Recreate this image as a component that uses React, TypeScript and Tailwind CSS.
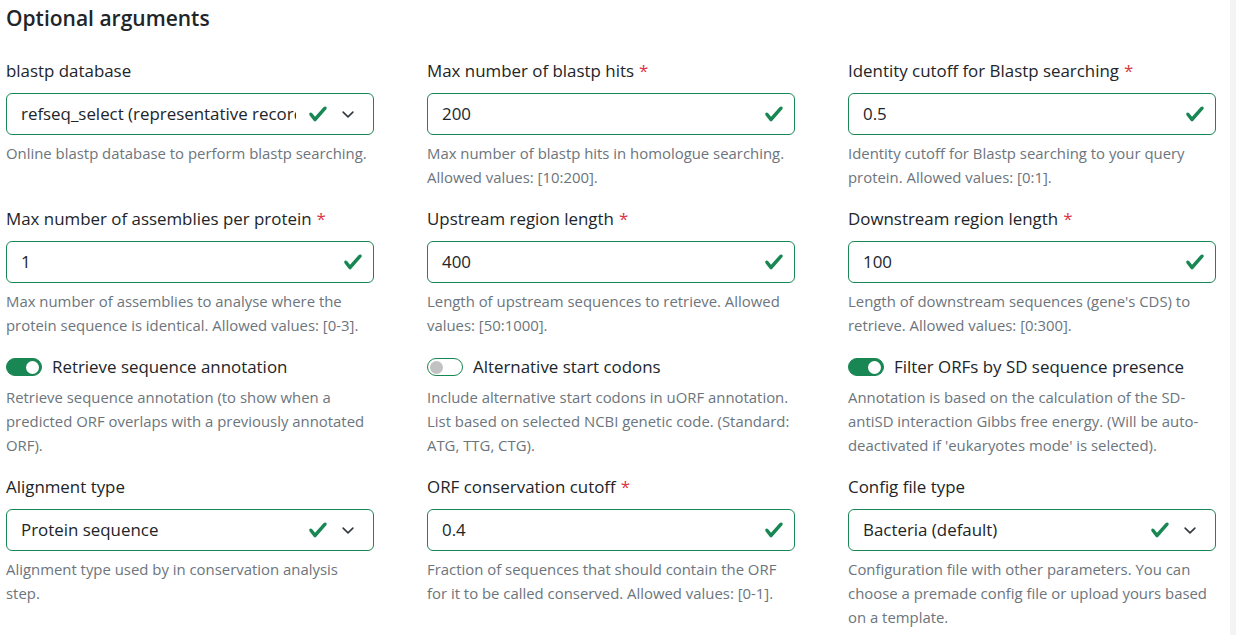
import React from 'react';

type Field = {
  kind: 'input' | 'select' | 'switch';
  label: string;
  required?: boolean;
  value?: string;
  on?: boolean;
  help: string;
};

const ROWS: Field[][] = [
  [
    {
      kind: 'select',
      label: 'blastp database',
      value: 'refseq_select (representative records)',
      help: 'Online blastp database to perform blastp searching.',
    },
    {
      kind: 'input',
      label: 'Max number of blastp hits',
      required: true,
      value: '200',
      help: 'Max number of blastp hits in homologue searching. Allowed values: [10:200].',
    },
    {
      kind: 'input',
      label: 'Identity cutoff for Blastp searching',
      required: true,
      value: '0.5',
      help: 'Identity cutoff for Blastp searching to your query protein. Allowed values: [0:1].',
    },
  ],
  [
    {
      kind: 'input',
      label: 'Max number of assemblies per protein',
      required: true,
      value: '1',
      help: 'Max number of assemblies to analyse where the protein sequence is identical. Allowed values: [0-3].',
    },
    {
      kind: 'input',
      label: 'Upstream region length',
      required: true,
      value: '400',
      help: 'Length of upstream sequences to retrieve. Allowed values: [50:1000].',
    },
    {
      kind: 'input',
      label: 'Downstream region length',
      required: true,
      value: '100',
      help: "Length of downstream sequences (gene's CDS) to retrieve. Allowed values: [0:300].",
    },
  ],
  [
    {
      kind: 'switch',
      label: 'Retrieve sequence annotation',
      on: true,
      help: 'Retrieve sequence annotation (to show when a predicted ORF overlaps with a previously annotated ORF).',
    },
    {
      kind: 'switch',
      label: 'Alternative start codons',
      on: false,
      help: 'Include alternative start codons in uORF annotation. List based on selected NCBI genetic code. (Standard: ATG, TTG, CTG).',
    },
    {
      kind: 'switch',
      label: 'Filter ORFs by SD sequence presence',
      on: true,
      help: "Annotation is based on the calculation of the SD-antiSD interaction Gibbs free energy. (Will be auto-deactivated if 'eukaryotes mode' is selected).",
    },
  ],
  [
    {
      kind: 'select',
      label: 'Alignment type',
      value: 'Protein sequence',
      help: 'Alignment type used by in conservation analysis step.',
    },
    {
      kind: 'input',
      label: 'ORF conservation cutoff',
      required: true,
      value: '0.4',
      help: 'Fraction of sequences that should contain the ORF for it to be called conserved. Allowed values: [0-1].',
    },
    {
      kind: 'select',
      label: 'Config file type',
      value: 'Bacteria (default)',
      help: 'Configuration file with other parameters. You can choose a premade config file or upload yours based on a template.',
    },
  ],
];

function ValidCheck() {
  return (
    <svg width="20" height="20" viewBox="0 0 8 8" className="shrink-0">
      <path
        fill="#198754"
        d="M2.3 6.73.6 4.53c-.4-1.04.46-1.4 1.1-.8l1.1 1.4 3.4-3.8c.6-.63 1.6-.27 1.2.7l-4 4.6c-.43.5-.8.4-1.1.1z"
      />
    </svg>
  );
}

function Chevron() {
  return (
    <svg width="18" height="13" viewBox="0 0 16 16" className="shrink-0">
      <path d="m2 5 6 6 6-6" fill="none" stroke="#343a40" strokeWidth="2" strokeLinecap="round" strokeLinejoin="round" />
    </svg>
  );
}

function Help({ text, toggle }: { text: string; toggle?: boolean }) {
  return (
    <p className={`${toggle ? 'mt-[5px]' : 'mt-[6px]'} text-[14.9px] leading-[24px] text-[#6c757d]`}>{text}</p>
  );
}

function FieldCell({ f }: { f: Field }) {
  if (f.kind === 'switch') {
    return (
      <div>
        <div className="flex h-[26px] items-center">
          <span
            className={`flex h-[18px] w-[36px] items-center rounded-full border border-[#198754] px-[2px] ${
              f.on ? 'justify-end bg-[#198754]' : 'justify-start bg-white'
            }`}
          >
            <span className={`h-[13px] w-[13px] rounded-full ${f.on ? 'bg-white' : 'bg-[#c2c2c2]'}`} />
          </span>
          <span className="ml-[10px] text-[16.9px] text-[#212529]">{f.label}</span>
        </div>
        <Help text={f.help} toggle />
      </div>
    );
  }

  return (
    <div>
      <div className="mb-[9px] text-[16.9px] leading-[26px] text-[#212529]">
        {f.label}
        {f.required && <span className="ml-[5px] text-[#dc3545]">*</span>}
      </div>
      <div className="flex h-[42px] items-center rounded-[6px] border border-[#198754] bg-white pl-[14px]">
        <span className="min-w-0 flex-1 overflow-hidden whitespace-nowrap text-[16.9px] text-[#212529]">{f.value}</span>
        {f.kind === 'select' ? (
          <div className="flex items-center gap-[11px] pl-[12px] pr-[16px]">
            <ValidCheck />
            <Chevron />
          </div>
        ) : (
          <div className="pl-[12px] pr-[10px]">
            <ValidCheck />
          </div>
        )}
      </div>
      <Help text={f.help} />
    </div>
  );
}

export default function App() {
  return (
    <div className="flex h-[635px] w-[1236px] overflow-hidden bg-white font-['Open_Sans','Noto_Sans',sans-serif]">
      <main className="flex-1 pl-[6px] pt-[5px]">
        <h2 className="text-[21px] font-semibold leading-[26px] text-[#212529]">Optional arguments</h2>
        <div className="mt-[27px] grid grid-cols-[368px_368px_368px] gap-x-[53px] gap-y-[17px]">
          {ROWS.flat().map((f) => (
            <FieldCell key={f.label} f={f} />
          ))}
        </div>
      </main>
      <div className="w-[6px] bg-[#f3f4f6]" />
    </div>
  );
}
